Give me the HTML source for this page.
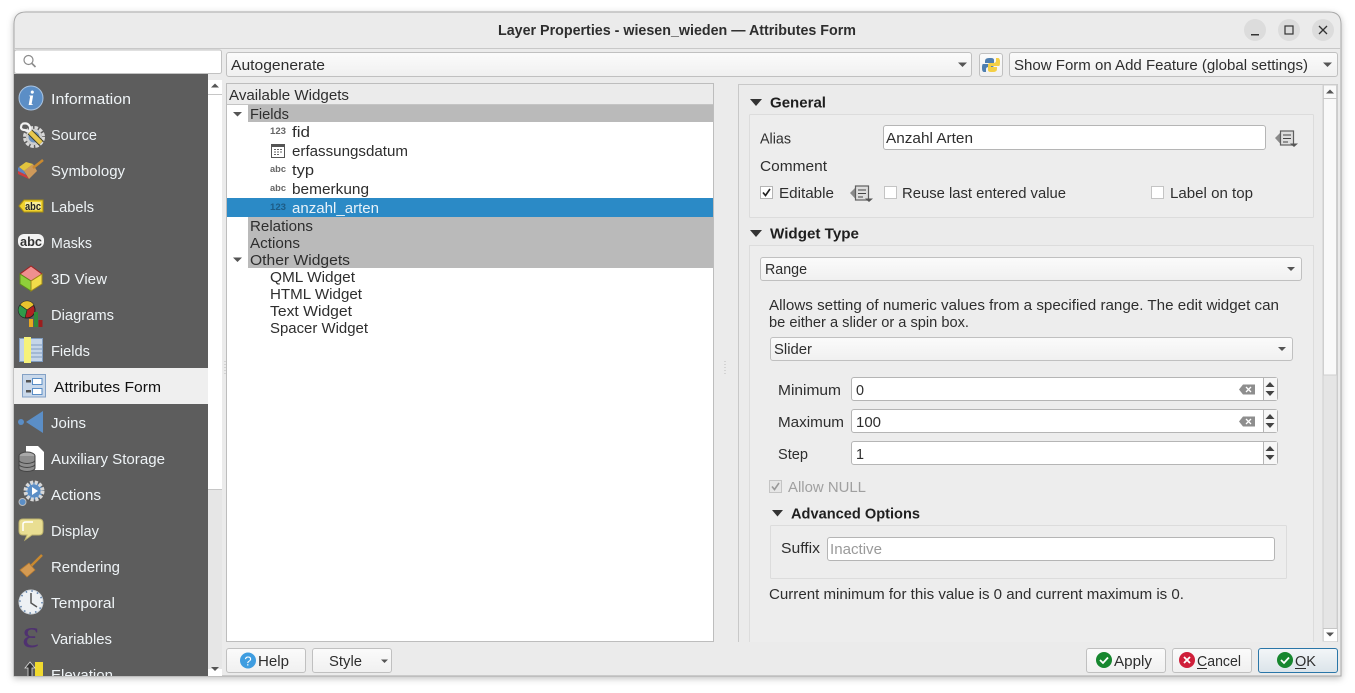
<!DOCTYPE html>
<html><head><meta charset="utf-8"><title>Layer Properties</title>
<style>
html,body{margin:0;padding:0;background:#fff;width:1355px;height:693px;overflow:hidden}
svg{display:block}
text{font-family:"Liberation Sans",sans-serif;font-size:15px;fill:#2e2e2e}
.l{fill:#eef3f6}
.b{font-weight:bold;fill:#1f1f1f}
</style></head><body>
<svg width="1355" height="693" viewBox="0 0 1355 693" xmlns="http://www.w3.org/2000/svg">
<defs>
<filter id="sh" x="-3%" y="-5%" width="106%" height="110%"><feDropShadow dx="0" dy="2" stdDeviation="3.500" flood-color="#000" flood-opacity=".25"/></filter>
<linearGradient id="btn" x1="0" y1="0" x2="0" y2="1"><stop offset="0" stop-color="#fbfbfb"/><stop offset="1" stop-color="#f0f0f0"/></linearGradient>
<linearGradient id="ok" x1="0" y1="0" x2="0" y2="1"><stop offset="0" stop-color="#f3f6f8"/><stop offset="1" stop-color="#dbe4ea"/></linearGradient>
<clipPath id="side"><rect x="14" y="73" width="194" height="603"/></clipPath>
<g id="expr"><path d="M0 8.500 L6 2.500 V15Z" fill="#8a8a8a"/><rect x="5.500" y="1.500" width="13" height="14" fill="#dedede" stroke="#5f5f5f" stroke-width="1.200"/><path d="M8 5.500h8M8 9h8M8 12.500h5" stroke="#444" stroke-width="1.100" fill="none"/><path d="M15 14h8l-4 3.500z" fill="#555"/></g>
<g id="clr"><path d="M0 5 L4 0 H16 V10 H4Z" fill="#8e8e8e"/><path d="M7 2.500l5 5M12 2.500l-5 5" stroke="#fff" stroke-width="1.300"/></g>
<g id="spin"><path d="M2.500 6 L7 1 L11.500 6Z M2.500 10 H11.500 L7 15Z" fill="#444"/></g>
</defs>

<!-- window -->
<path d="M14 676 V24 Q14 12 26 12 H1329 Q1341 12 1341 24 V676Z" fill="#ebebeb" stroke="#a8a8a8" filter="url(#sh)"/>
<rect x="14" y="48" width="1327" height="1" fill="#c8c8c8"/>
<text x="498" y="35" textLength="358" lengthAdjust="spacingAndGlyphs" class="b" style="fill:#2e2e2e">Layer Properties - wiesen_wieden — Attributes Form</text>
<circle cx="1255" cy="30" r="11" fill="#dcdcdc"/><rect x="1251" y="34" width="8" height="1.500" fill="#333"/>
<circle cx="1289" cy="30" r="11" fill="#dcdcdc"/><rect x="1285" y="26" width="8" height="8" fill="none" stroke="#333" stroke-width="1.200"/>
<circle cx="1323" cy="30" r="11" fill="#dcdcdc"/><path d="M1319 26l8 8M1327 26l-8 8" stroke="#333" stroke-width="1.300"/>

<!-- search -->
<rect x="14.500" y="50" width="207" height="23.500" rx="2" fill="#fff" stroke="#c2c2c2"/>
<circle cx="28.500" cy="60" r="4.500" fill="none" stroke="#8a8a8a" stroke-width="1.200"/><path d="M32 63.500l3.500 3.500" stroke="#8a8a8a" stroke-width="1.600"/>

<!-- sidebar -->
<rect x="14" y="74" width="194" height="602" fill="#5d5d5d"/>
<rect x="14" y="368" width="194" height="36" fill="#efefef"/>
<rect x="208" y="80" width="14" height="596" fill="#fff"/>
<rect x="208" y="489" width="14" height="180" fill="#e6e6e6"/>
<path d="M208 94.500h14M208 489.500h14" stroke="#c6c6c6"/>
<path d="M211 87.500l4-4 4 4z M211 667l4 4 4-4z" fill="#555"/>
<g clip-path="url(#side)">
<text class="l" x="51" y="104" textLength="80" lengthAdjust="spacingAndGlyphs">Information</text>
<text class="l" x="51" y="140" textLength="46" lengthAdjust="spacingAndGlyphs">Source</text>
<text class="l" x="51" y="176" textLength="74" lengthAdjust="spacingAndGlyphs">Symbology</text>
<text class="l" x="51" y="212" textLength="43" lengthAdjust="spacingAndGlyphs">Labels</text>
<text class="l" x="51" y="248" textLength="41" lengthAdjust="spacingAndGlyphs">Masks</text>
<text class="l" x="51" y="284" textLength="56" lengthAdjust="spacingAndGlyphs">3D View</text>
<text class="l" x="51" y="320" textLength="63" lengthAdjust="spacingAndGlyphs">Diagrams</text>
<text class="l" x="51" y="356" textLength="39" lengthAdjust="spacingAndGlyphs">Fields</text>
<text x="54" y="392" textLength="107" lengthAdjust="spacingAndGlyphs" style="fill:#111">Attributes Form</text>
<text class="l" x="51" y="428" textLength="35" lengthAdjust="spacingAndGlyphs">Joins</text>
<text class="l" x="51" y="464" textLength="114" lengthAdjust="spacingAndGlyphs">Auxiliary Storage</text>
<text class="l" x="51" y="500" textLength="50" lengthAdjust="spacingAndGlyphs">Actions</text>
<text class="l" x="51" y="536" textLength="48" lengthAdjust="spacingAndGlyphs">Display</text>
<text class="l" x="51" y="572" textLength="69" lengthAdjust="spacingAndGlyphs">Rendering</text>
<text class="l" x="51" y="608" textLength="64" lengthAdjust="spacingAndGlyphs">Temporal</text>
<text class="l" x="51" y="644" textLength="61" lengthAdjust="spacingAndGlyphs">Variables</text>
<text class="l" x="51" y="680" textLength="62" lengthAdjust="spacingAndGlyphs">Elevation</text>

<!-- Information -->
<circle cx="31" cy="98" r="12" fill="#5b8ec6" stroke="#a9c4e2"/>
<text x="31" y="105" text-anchor="middle" style="font-family:'Liberation Serif',serif;font-style:italic;font-weight:bold;font-size:21px;fill:#fff">i</text>
<!-- Source -->
<circle cx="34" cy="137" r="9.500" fill="none" stroke="#d9d9d9" stroke-width="3" stroke-dasharray="3.500 1.500"/>
<circle cx="34" cy="137" r="8" fill="#cfcfcf"/>
<circle cx="34" cy="137" r="5.500" fill="#6d93bf"/>
<path d="M22 124 Q19 130 25 130 L30 132 M22 124 Q28 122 30 127 L30 132" stroke="#f2f2f2" stroke-width="2.200" fill="none"/>
<path d="M30 132 L41 143" stroke="#3c3c28" stroke-width="6.500"/>
<path d="M30 132 L41 143" stroke="#e8c84e" stroke-width="4.500"/>
<!-- Symbology -->
<path d="M24 171 L33 164 L37 171 L29 179Z" fill="#cf9a5a"/>
<path d="M19 167 L26 162 L33 164 L24 171Z" fill="#e2c43e"/>
<path d="M18 168 L19 167 L24 171 L26 175 L18 171Z" fill="#5f83c0"/>
<path d="M18 171 L26 175 L29 179 L18 174Z" fill="#d23b3b"/>
<path d="M33 168 L43 160" stroke="#c9892f" stroke-width="2.500"/>
<!-- Labels -->
<path d="M19 206 L24 200 H43 V212 H24Z" fill="#f0d22f" stroke="#a98f10"/>
<rect x="25" y="202" width="16" height="8" rx="1" fill="#f6ec9a"/>
<text x="33" y="210" text-anchor="middle" textLength="16" lengthAdjust="spacingAndGlyphs" style="font-size:11px;font-weight:bold;fill:#222">abc</text>
<!-- Masks -->
<rect x="18" y="234" width="26" height="14" rx="6" fill="#f4f4f4"/>
<text x="31" y="246" text-anchor="middle" textLength="22" lengthAdjust="spacingAndGlyphs" style="font-size:13px;font-weight:bold;fill:#333">abc</text>
<!-- 3D -->
<path d="M31 266 L42 274 L31 281 L20 274Z" fill="#ef8f8f" stroke="#a02020"/>
<path d="M20 274 L31 281 V291 L20 284Z" fill="#8fcf3a" stroke="#5f8a1a"/>
<path d="M42 274 L31 281 V291 L42 284Z" fill="#f2dc4a" stroke="#a08a1a"/>
<!-- Diagrams -->
<circle cx="27" cy="310" r="8" fill="#b22222" stroke="#222"/>
<path d="M27 310 L20 305 A8 8 0 0 1 34 305Z" fill="#e8c32e" stroke="#222" stroke-width=".6"/>
<path d="M27 310 L20 305 A8 8 0 0 0 25 318Z" fill="#2f9a4a" stroke="#222" stroke-width=".6"/>
<rect x="29" y="319" width="4" height="8" fill="#e8a820"/>
<rect x="34" y="312" width="4" height="15" fill="#2f8a3a"/>
<rect x="38.500" y="320" width="4" height="7" fill="#9c1d1d"/>
<!-- Fields -->
<rect x="19.500" y="338.500" width="23" height="23" fill="#c5d5e8" stroke="#7f9cc0"/>
<path d="M31 345h11M31 349h11M31 353h11M31 357h11" stroke="#7f9cc0"/>
<rect x="24" y="337" width="7" height="26" fill="#f6f27a"/>
<!-- Attributes form -->
<rect x="22.500" y="374.500" width="23" height="22.500" fill="#c9d8ea" stroke="#84a1c5"/>
<rect x="26" y="380" width="5" height="2.500" fill="#555"/><rect x="26" y="390" width="5" height="2.500" fill="#555"/>
<rect x="32.500" y="378.500" width="9.500" height="6" fill="#fff" stroke="#5b8ec6"/><rect x="32.500" y="388.500" width="9.500" height="6" fill="#fff" stroke="#5b8ec6"/>
<!-- Joins -->
<circle cx="21" cy="422" r="3" fill="#5b8ec6"/>
<path d="M26 422 L43 411 V433Z" fill="#5b8ec6"/>
<!-- Aux -->
<path d="M26 446 H38 L44 452 V470 H26Z" fill="#fff"/>
<ellipse cx="27" cy="456" rx="8" ry="4" fill="#a9a9a9" stroke="#444"/>
<path d="M19 456 V468 A8 3.500 0 0 0 35 468 V456" fill="#8d8d8d" stroke="#444"/>
<path d="M19 460 A8 3.500 0 0 0 35 460 M19 464 A8 3.500 0 0 0 35 464" fill="none" stroke="#444"/>
<!-- Actions -->
<circle cx="34" cy="491" r="8.500" fill="#5b8ec6" stroke="#d8d8d8" stroke-width="4" stroke-dasharray="3 1.500"/>
<circle cx="34" cy="491" r="6.500" fill="#5b8ec6"/><path d="M32 487 L38 491 L32 495Z" fill="#fff"/>
<circle cx="22.500" cy="502" r="3.500" fill="#5b8ec6" stroke="#bbb"/>
<!-- Display -->
<path d="M23 519 H39 Q43 519 43 523 V531 Q43 535 39 535 H32 L25 540 L27 535 H23 Q19 535 19 531 V523 Q19 519 23 519Z" fill="#e9de92" stroke="#bdb36c"/>
<path d="M23 531 V524 Q23 522 26 522 H33" stroke="#fff" stroke-width="1.500" fill="none"/>
<!-- Rendering -->
<path d="M31 566 L42 555" stroke="#c9892f" stroke-width="2.500"/>
<path d="M20 570 L29 563 L35 570 L27 577Z" fill="#d49a52" stroke="#b57a30" stroke-width=".8"/>
<!-- Temporal -->
<circle cx="31" cy="602" r="12" fill="#eef1f4" stroke="#cfd6dd"/>
<circle cx="31" cy="602" r="11" fill="none" stroke="#5e7fa8" stroke-width="1.500" stroke-dasharray="1.500 4.260"/>
<path d="M31 593 V603 L37 607" stroke="#555" stroke-width="1.500" fill="none"/>
<!-- Variables -->
<text x="30.500" y="647" text-anchor="middle" style="font-family:'Liberation Serif',serif;font-size:40px;fill:#4f3170">&#949;</text>
<!-- Elevation -->
<rect x="35" y="662" width="8" height="16" fill="#f0d92e"/>
<path d="M30 662 L25 668 H28 V680 H32 V668 H35Z" fill="#333" stroke="#ddd" stroke-width=".8"/>
</g>

<!-- top combos -->
<rect x="226.500" y="52.500" width="745" height="24" rx="2.500" fill="url(#btn)" stroke="#c0c0c0"/>
<text x="231" y="70" textLength="94" lengthAdjust="spacingAndGlyphs">Autogenerate</text>
<path d="M958 62.500h9l-4.500 4.500z" fill="#555"/>
<rect x="979.500" y="53.500" width="23" height="23" rx="2.500" fill="url(#btn)" stroke="#c0c0c0"/>
<path d="M991 58 h-2 q-4 0-4 3 v2 h6 v1 h-8 q-1 0-1 4 t2 4 h2 v-3 q0-2 3-2 h3 q2 0 2-2 v-5 q0-2-3-2Z" fill="#4f7fb0"/>
<path d="M991 72 h2 q4 0 4-3 v-2 h-6 v-1 h8 q1 0 1-4 t-2-4 h-2 v3 q0 2-3 2 h-3 q-2 0-2 2 v5 q0 2 3 2Z" fill="#f4cf45"/>
<rect x="1009.500" y="52.500" width="328" height="24" rx="2.500" fill="url(#btn)" stroke="#c0c0c0"/>
<text x="1014" y="70" textLength="294" lengthAdjust="spacingAndGlyphs">Show Form on Add Feature (global settings)</text>
<path d="M1323 62.500h9l-4.500 4.500z" fill="#555"/>

<!-- tree -->
<rect x="226.500" y="83.500" width="487" height="558" fill="#fff" stroke="#bdbdbd"/>
<rect x="227" y="84" width="486" height="20" fill="#ebebeb"/>
<rect x="227" y="104" width="486" height="1" fill="#c4c4c4"/>
<text x="229" y="100" textLength="120" lengthAdjust="spacingAndGlyphs">Available Widgets</text>
<rect x="248" y="105" width="465" height="17" fill="#bababa"/>
<rect x="248" y="217" width="465" height="51" fill="#bababa"/>
<rect x="227" y="198" width="486" height="19" fill="#2b8ac6"/>
<path d="M233 112h9l-4.500 4.500z M233 257.500h9l-4.500 4.500z" fill="#555"/>
<text x="250" y="119" textLength="39" lengthAdjust="spacingAndGlyphs">Fields</text>
<text x="292" y="137" textLength="18" lengthAdjust="spacingAndGlyphs">fid</text>
<text x="292" y="156" textLength="116" lengthAdjust="spacingAndGlyphs">erfassungsdatum</text>
<text x="292" y="175" textLength="22" lengthAdjust="spacingAndGlyphs">typ</text>
<text x="292" y="194" textLength="77" lengthAdjust="spacingAndGlyphs">bemerkung</text>
<text x="292" y="213" textLength="87" lengthAdjust="spacingAndGlyphs" style="fill:#e8f2f9">anzahl_arten</text>
<text x="250" y="231" textLength="63" lengthAdjust="spacingAndGlyphs">Relations</text>
<text x="250" y="248" textLength="50" lengthAdjust="spacingAndGlyphs">Actions</text>
<text x="250" y="265" textLength="100" lengthAdjust="spacingAndGlyphs">Other Widgets</text>
<text x="270" y="282" textLength="85" lengthAdjust="spacingAndGlyphs">QML Widget</text>
<text x="270" y="299" textLength="92" lengthAdjust="spacingAndGlyphs">HTML Widget</text>
<text x="270" y="316" textLength="82" lengthAdjust="spacingAndGlyphs">Text Widget</text>
<text x="270" y="333" textLength="98" lengthAdjust="spacingAndGlyphs">Spacer Widget</text>
<text x="270" y="134" textLength="16" lengthAdjust="spacingAndGlyphs" style="font-size:9px;font-weight:bold;fill:#666">123</text>
<text x="270" y="172" textLength="16" lengthAdjust="spacingAndGlyphs" style="font-size:9px;font-weight:bold;fill:#666">abc</text>
<text x="270" y="191" textLength="16" lengthAdjust="spacingAndGlyphs" style="font-size:9px;font-weight:bold;fill:#666">abc</text>
<text x="270" y="210" textLength="16" lengthAdjust="spacingAndGlyphs" style="font-size:9px;font-weight:bold;fill:#1d5c86">123</text>
<rect x="271.500" y="144.500" width="13" height="13" fill="#fff" stroke="#555"/><rect x="271" y="144" width="14" height="3" fill="#555"/>
<path d="M274 149.500h2M277 149.500h2M280 149.500h2M274 152h2M277 152h2M280 152h2M274 154.500h2M277 154.500h2" stroke="#666"/>

<!-- splitters -->
<path d="M225 361v14M725 361v14" stroke="#bbb" stroke-dasharray="1 2"/>

<!-- right panel -->
<path d="M738.500 642V84.500H1337.500V642" fill="none" stroke="#c8c8c8"/>
<rect x="1323" y="85" width="14" height="556" fill="#e5e5e5" stroke="#cfcfcf"/>
<rect x="1323.500" y="85" width="13" height="290" fill="#f9f9f9" stroke="#cfcfcf"/>
<path d="M1323 98.500h14M1323 628.500h14" stroke="#c6c6c6"/>
<rect x="1324" y="629" width="13" height="12" fill="#fff"/>
<path d="M1326 93.500l4-4 4 4z M1326 632.500l4 4 4-4z" fill="#555"/>

<path d="M750 99h12l-6 7z M750 230h12l-6 7z" fill="#333"/>
<text x="770" y="107.500" textLength="56" lengthAdjust="spacingAndGlyphs" class="b">General</text>
<rect x="749.500" y="114.500" width="564" height="103" rx="1" fill="#ededed" stroke="#dcdcdc"/>
<text x="760" y="143.500" textLength="31" lengthAdjust="spacingAndGlyphs">Alias</text>
<rect x="883.500" y="125.500" width="382" height="24" rx="2.500" fill="#fff" stroke="#b5b5b5"/>
<text x="886" y="143" textLength="87" lengthAdjust="spacingAndGlyphs">Anzahl Arten</text>
<use href="#expr" x="1275" y="129.500"/>
<text x="760" y="171" textLength="67" lengthAdjust="spacingAndGlyphs">Comment</text>
<rect x="760.500" y="186.500" width="12" height="12" fill="#fff" stroke="#b5b5b5"/>
<path d="M763 192.500l2.500 3 4.500-6.500" fill="none" stroke="#222" stroke-width="1.700"/>
<text x="779" y="198" textLength="55" lengthAdjust="spacingAndGlyphs">Editable</text>
<use href="#expr" x="850" y="184.500"/>
<rect x="884.500" y="186.500" width="12" height="12" fill="#fff" stroke="#c4c4c4"/>
<text x="902" y="198" textLength="164" lengthAdjust="spacingAndGlyphs">Reuse last entered value</text>
<rect x="1151.500" y="186.500" width="12" height="12" fill="#fff" stroke="#c4c4c4"/>
<text x="1170" y="198" textLength="83" lengthAdjust="spacingAndGlyphs">Label on top</text>

<text x="770" y="238.500" textLength="89" lengthAdjust="spacingAndGlyphs" class="b">Widget Type</text>
<path d="M749.500 642V245.500H1313.500V642" fill="#ededed" stroke="#dcdcdc"/>
<rect x="760.500" y="257.500" width="541" height="23" rx="2.500" fill="url(#btn)" stroke="#c0c0c0"/>
<text x="765" y="274" textLength="42" lengthAdjust="spacingAndGlyphs">Range</text>
<path d="M1287 267h8l-4 4z" fill="#555"/>
<text x="769" y="310" textLength="510" lengthAdjust="spacingAndGlyphs">Allows setting of numeric values from a specified range. The edit widget can</text>
<text x="769" y="327" textLength="200" lengthAdjust="spacingAndGlyphs">be either a slider or a spin box.</text>
<rect x="770.500" y="337.500" width="522" height="23" rx="2.500" fill="url(#btn)" stroke="#c0c0c0"/>
<text x="774" y="354" textLength="38" lengthAdjust="spacingAndGlyphs">Slider</text>
<path d="M1278 347h8l-4 4z" fill="#555"/>

<text x="778" y="395" textLength="63" lengthAdjust="spacingAndGlyphs">Minimum</text>
<text x="778" y="427" textLength="66" lengthAdjust="spacingAndGlyphs">Maximum</text>
<text x="778" y="459" textLength="30" lengthAdjust="spacingAndGlyphs">Step</text>
<rect x="851.500" y="377.500" width="426" height="23" rx="2.500" fill="#fff" stroke="#b5b5b5"/>
<rect x="851.500" y="409.500" width="426" height="23" rx="2.500" fill="#fff" stroke="#b5b5b5"/>
<rect x="851.500" y="441.500" width="426" height="23" rx="2.500" fill="#fff" stroke="#b5b5b5"/>
<path d="M1263.500 378v22M1263.500 410v22M1263.500 442v22" stroke="#b5b5b5"/>
<rect x="1264" y="378" width="13" height="22" fill="#f7f7f7"/><rect x="1264" y="410" width="13" height="22" fill="#f7f7f7"/><rect x="1264" y="442" width="13" height="22" fill="#f7f7f7"/>
<use href="#spin" x="1263" y="381"/><use href="#spin" x="1263" y="413"/><use href="#spin" x="1263" y="445"/>
<use href="#clr" x="1239" y="384.500"/><use href="#clr" x="1239" y="416.500"/>
<text x="856" y="395" textLength="8" lengthAdjust="spacingAndGlyphs">0</text>
<text x="856" y="427" textLength="25" lengthAdjust="spacingAndGlyphs">100</text>
<text x="856" y="459" textLength="8" lengthAdjust="spacingAndGlyphs">1</text>

<rect x="769.500" y="480.500" width="12" height="12" fill="#e6e6e6" stroke="#c4c4c4"/>
<path d="M772 486.500l2.500 3 4.500-6.500" fill="none" stroke="#999" stroke-width="1.600"/>
<text x="788" y="492" textLength="78" lengthAdjust="spacingAndGlyphs" style="fill:#a0a0a0">Allow NULL</text>
<path d="M772 510h11l-5.500 6.500z" fill="#333"/>
<text x="791" y="518.500" textLength="129" lengthAdjust="spacingAndGlyphs" class="b">Advanced Options</text>
<rect x="770.500" y="525.500" width="516" height="53" rx="1" fill="#ededed" stroke="#dcdcdc"/>
<text x="781" y="553" textLength="39" lengthAdjust="spacingAndGlyphs">Suffix</text>
<rect x="827.500" y="537.500" width="447" height="23" rx="2.500" fill="#fff" stroke="#b5b5b5"/>
<text x="830" y="554" textLength="52" lengthAdjust="spacingAndGlyphs" style="fill:#9a9a9a">Inactive</text>
<text x="769" y="599" textLength="415" lengthAdjust="spacingAndGlyphs">Current minimum for this value is 0 and current maximum is 0.</text>

<!-- bottom buttons -->
<rect x="226.500" y="648.500" width="79" height="24" rx="2.500" fill="url(#btn)" stroke="#c0c0c0"/>
<circle cx="248" cy="660.500" r="8" fill="#3f9de0"/>
<text x="248" y="665.500" text-anchor="middle" style="font-size:13px;fill:#fff">?</text>
<text x="258" y="666" textLength="31" lengthAdjust="spacingAndGlyphs">Help</text>
<rect x="312.500" y="648.500" width="79" height="24" rx="2.500" fill="url(#btn)" stroke="#c0c0c0"/>
<text x="329" y="666" textLength="33" lengthAdjust="spacingAndGlyphs">Style</text>
<path d="M381 659.500h7l-3.500 3.500z" fill="#555"/>

<rect x="1086.500" y="648.500" width="79" height="24" rx="2.500" fill="url(#btn)" stroke="#c0c0c0"/>
<circle cx="1104" cy="660" r="8" fill="#17872f"/><path d="M1100 660l3 3 5-5.500" fill="none" stroke="#fff" stroke-width="1.800"/>
<text x="1114" y="666" textLength="38" lengthAdjust="spacingAndGlyphs">Apply</text>
<rect x="1172.500" y="648.500" width="79" height="24" rx="2.500" fill="url(#btn)" stroke="#c0c0c0"/>
<circle cx="1187" cy="660" r="8" fill="#cf1f3a"/><path d="M1184 657l6 6M1190 657l-6 6" stroke="#fff" stroke-width="1.800"/>
<text x="1197" y="666" textLength="44" lengthAdjust="spacingAndGlyphs">Cancel</text>
<rect x="1197" y="668" width="10" height="1" fill="#2e2e2e"/>
<rect x="1258.500" y="648.500" width="79" height="24" rx="2.500" fill="url(#ok)" stroke="#2a76a8"/>
<circle cx="1285" cy="660" r="8" fill="#17872f"/><path d="M1281 660l3 3 5-5.500" fill="none" stroke="#fff" stroke-width="1.800"/>
<text x="1295" y="666" textLength="21" lengthAdjust="spacingAndGlyphs">OK</text>
<rect x="1295" y="668" width="11" height="1" fill="#2e2e2e"/>
</svg>
</body></html>
